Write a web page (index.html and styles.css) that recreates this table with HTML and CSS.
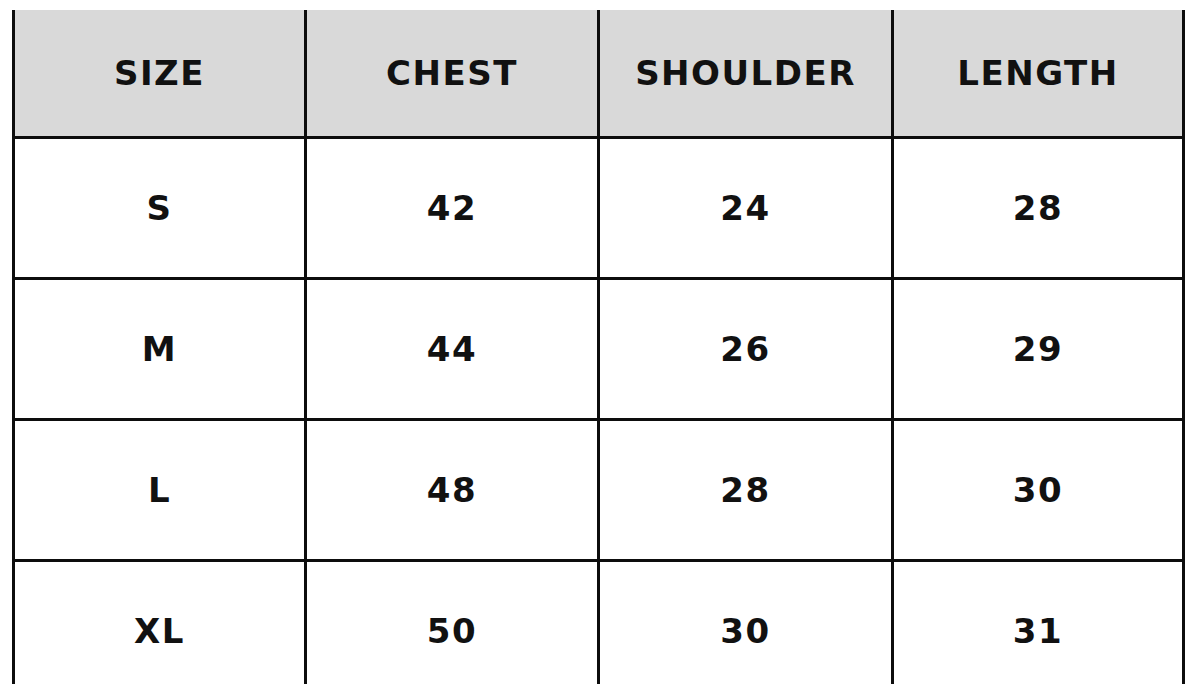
FILE: index.html
```html
<!DOCTYPE html>
<html lang="en">
<head>
<meta charset="utf-8">
<title>Size Chart</title>
<link rel="stylesheet" href="styles.css">
</head>
<body>
<div class="page">
  <div class="chart">
    <div class="cell head">SIZE</div>
    <div class="cell head">CHEST</div>
    <div class="cell head">SHOULDER</div>
    <div class="cell head">LENGTH</div>

    <div class="cell">S</div>
    <div class="cell">42</div>
    <div class="cell">24</div>
    <div class="cell">28</div>

    <div class="cell">M</div>
    <div class="cell">44</div>
    <div class="cell">26</div>
    <div class="cell">29</div>

    <div class="cell">L</div>
    <div class="cell">48</div>
    <div class="cell">28</div>
    <div class="cell">30</div>

    <div class="cell">XL</div>
    <div class="cell">50</div>
    <div class="cell">30</div>
    <div class="cell">31</div>
  </div>
</div>
</body>
</html>
```
FILE: styles.css
```css
html, body {
  margin: 0;
  padding: 0;
  background: #ffffff;
}

.page {
  padding: 10px 0 0 12px;
}

.chart {
  width: 1173px;
  height: 674px;
  overflow: hidden;
  box-sizing: border-box;
  display: grid;
  grid-template-columns: 289px 290px 291px 288px;
  grid-template-rows: 126px repeat(4, 138px);
  column-gap: 3px;
  row-gap: 3px;
  padding: 0 3px;
  background: #0d0d0d;
  align-content: start;
}

.cell {
  background: #ffffff;
  display: flex;
  align-items: center;
  justify-content: center;
  font-family: "DejaVu Sans", "Liberation Sans", sans-serif;
  font-weight: 700;
  font-size: 34px;
  letter-spacing: 1.5px;
  color: #111111;
}

.head {
  background: #d9d9d9;
}
```
